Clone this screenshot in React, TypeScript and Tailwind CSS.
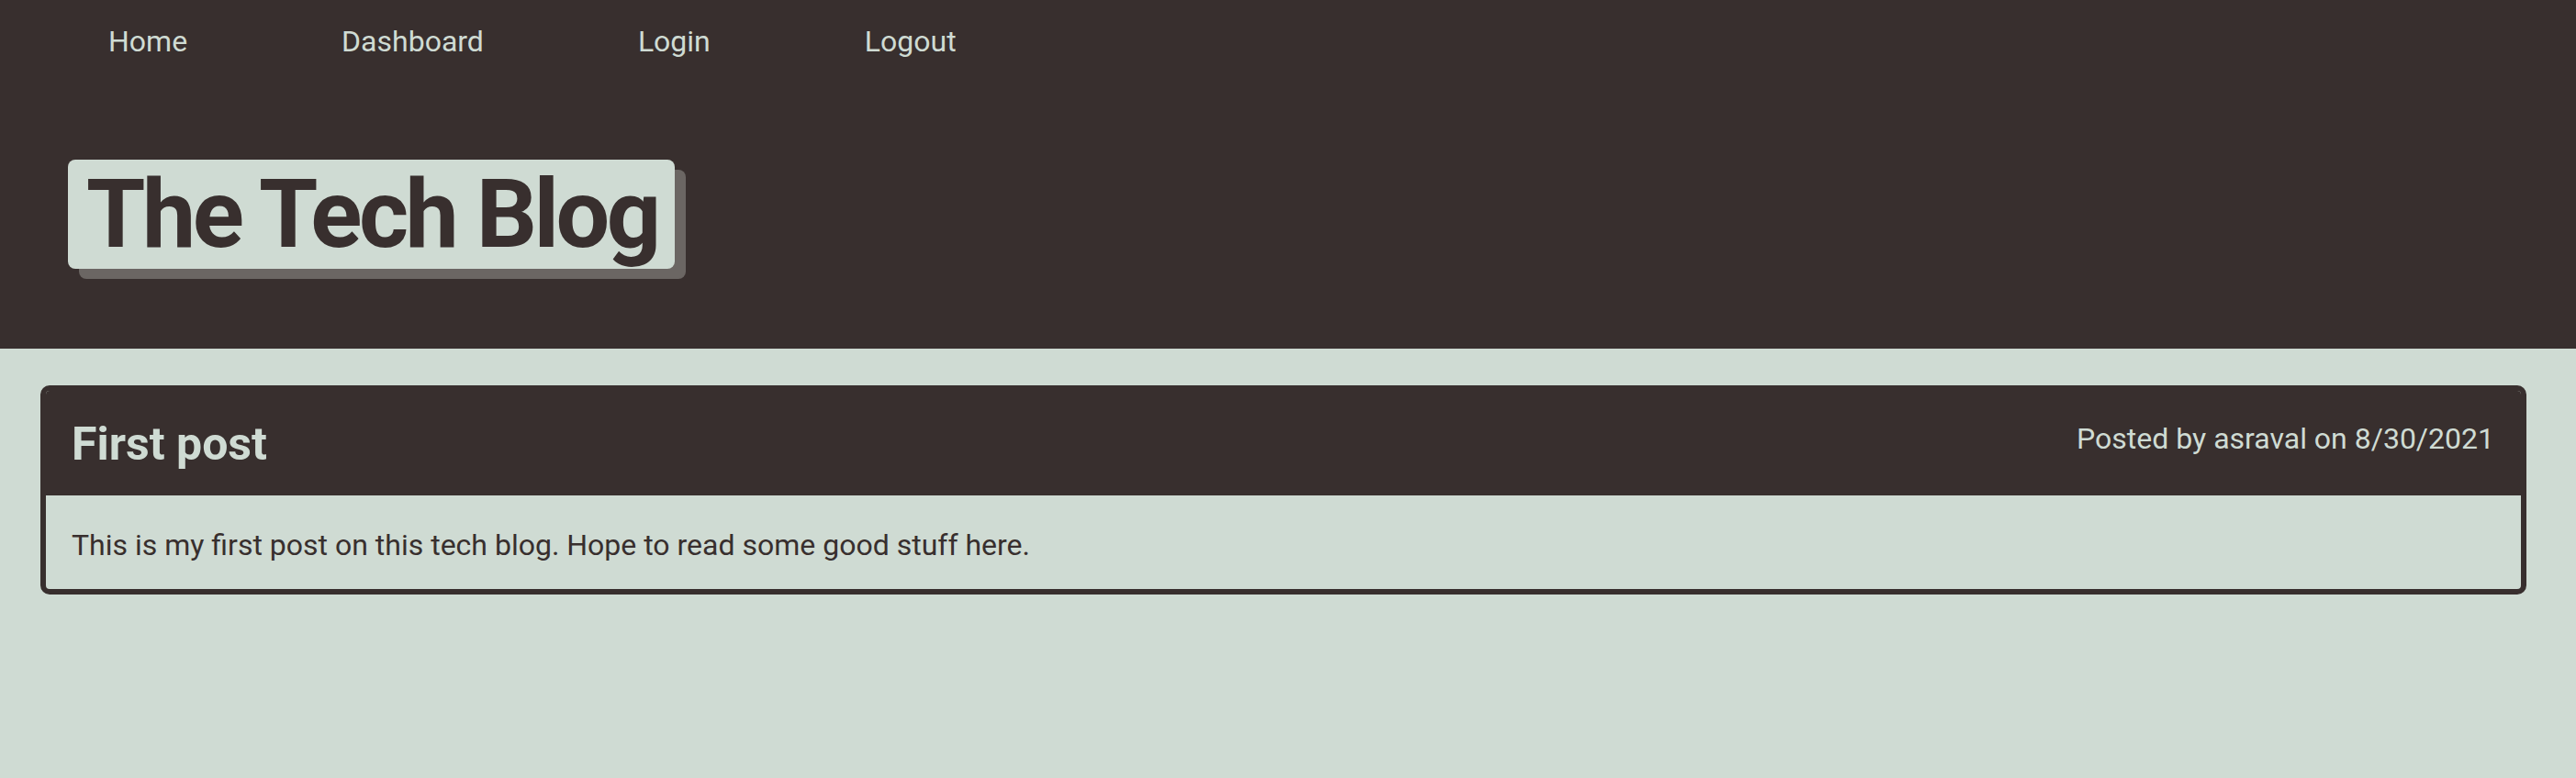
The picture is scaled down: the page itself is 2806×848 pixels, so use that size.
import React from "react";

export default function App() {
  return (
    <div
      className="min-h-screen bg-[#cfdbd3] text-[#382f2e]"
      style={{ fontFamily: "Roboto, 'Noto Sans', sans-serif" }}
    >
      <header className="bg-[#382f2e] h-[380px]">
        <nav className="flex h-[90px] items-center gap-[168px] pl-[118px] text-[32px] text-[#cfdbd3]">
          <a href="#">Home</a>
          <a href="#">Dashboard</a>
          <a href="#">Login</a>
          <a href="#">Logout</a>
        </nav>
        <div className="pl-[74px] mt-[84px]">
          <h1 className="inline-block bg-[#cfdbd3] rounded-[8px] shadow-[12px_11px_0_#6b6663] text-[104px] font-bold leading-[119px] pl-[20px] pr-[18px] text-[#382f2e] tracking-[-3.5px]">
            The Tech Blog
          </h1>
        </div>
      </header>
      <main className="pt-[40px] pl-[44px] pr-[54px]">
        <div className="border-[6px] border-[#382f2e] rounded-[10px] overflow-hidden">
          <div className="bg-[#382f2e] h-[114px] flex justify-between items-center pl-[28px] pr-[29px]">
            <h2 className="text-[50px] font-bold text-[#cfdbd3] mt-[2px]">First post</h2>
            <span className="text-[32px] text-[#cfdbd3] mb-[10px]">
              Posted by asraval on 8/30/2021
            </span>
          </div>
          <div className="h-[102px] flex items-center pl-[28px] pt-[5px] text-[32px]">
            This is my first post on this tech blog. Hope to read some good stuff here.
          </div>
        </div>
      </main>
    </div>
  );
}
